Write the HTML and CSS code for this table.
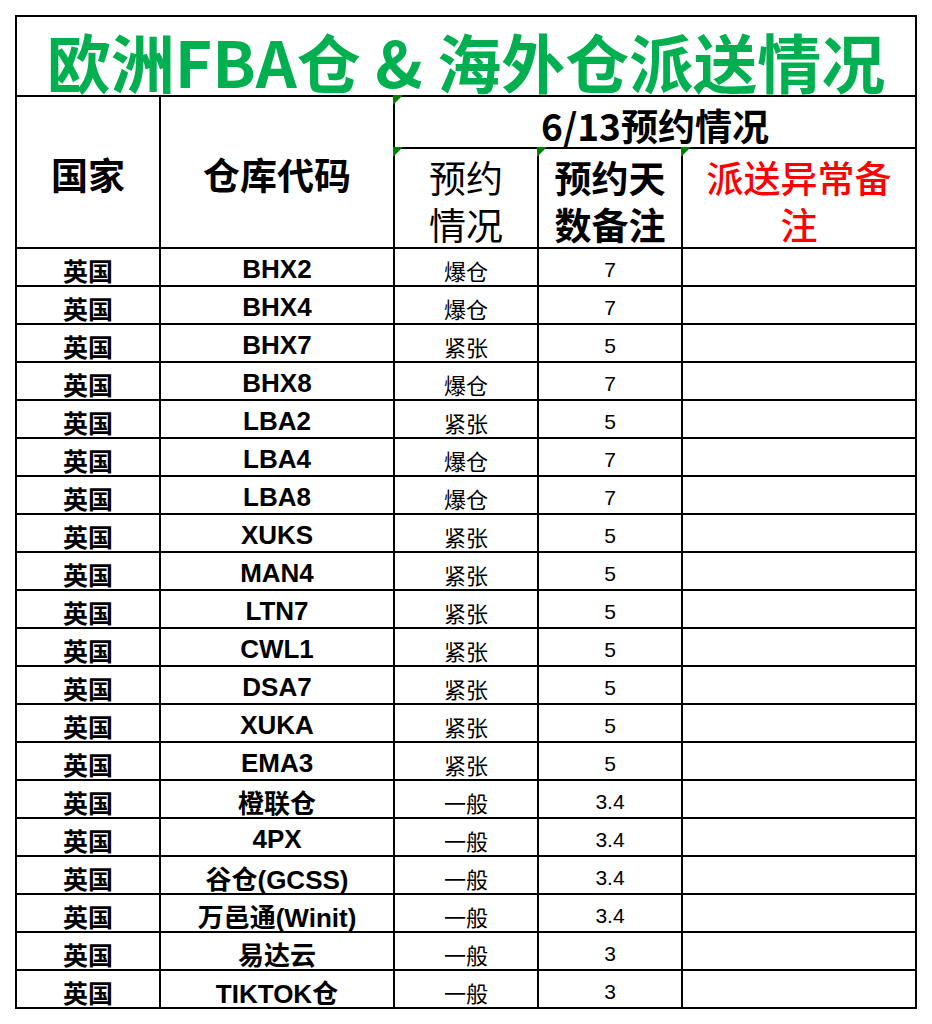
FILE: index.html
```html
<!DOCTYPE html>
<html lang="zh-CN">
<head>
<meta charset="utf-8">
<title>欧洲FBA仓 &amp; 海外仓派送情况</title>
<link rel="stylesheet" href="styles.css">
</head>
<body>
<div class="sheet">
  <div class="cell title">欧洲FBA仓 &amp; 海外仓派送情况</div>

  <div class="cell head span-rows">国家</div>
  <div class="cell head span-rows">仓库代码</div>
  <div class="cell head date flag">6/13预约情况</div>

  <div class="cell head thin flag">预约<br>情况</div>
  <div class="cell head flag">预约天<br>数备注</div>
  <div class="cell head red flag">派送异常备<br>注</div>

  <div class="cell country">英国</div><div class="cell code">BHX2</div><div class="cell status">爆仓</div><div class="cell days">7</div><div class="cell note"></div>
  <div class="cell country">英国</div><div class="cell code">BHX4</div><div class="cell status">爆仓</div><div class="cell days">7</div><div class="cell note"></div>
  <div class="cell country">英国</div><div class="cell code">BHX7</div><div class="cell status">紧张</div><div class="cell days">5</div><div class="cell note"></div>
  <div class="cell country">英国</div><div class="cell code">BHX8</div><div class="cell status">爆仓</div><div class="cell days">7</div><div class="cell note"></div>
  <div class="cell country">英国</div><div class="cell code">LBA2</div><div class="cell status">紧张</div><div class="cell days">5</div><div class="cell note"></div>
  <div class="cell country">英国</div><div class="cell code">LBA4</div><div class="cell status">爆仓</div><div class="cell days">7</div><div class="cell note"></div>
  <div class="cell country">英国</div><div class="cell code">LBA8</div><div class="cell status">爆仓</div><div class="cell days">7</div><div class="cell note"></div>
  <div class="cell country">英国</div><div class="cell code">XUKS</div><div class="cell status">紧张</div><div class="cell days">5</div><div class="cell note"></div>
  <div class="cell country">英国</div><div class="cell code">MAN4</div><div class="cell status">紧张</div><div class="cell days">5</div><div class="cell note"></div>
  <div class="cell country">英国</div><div class="cell code">LTN7</div><div class="cell status">紧张</div><div class="cell days">5</div><div class="cell note"></div>
  <div class="cell country">英国</div><div class="cell code">CWL1</div><div class="cell status">紧张</div><div class="cell days">5</div><div class="cell note"></div>
  <div class="cell country">英国</div><div class="cell code">DSA7</div><div class="cell status">紧张</div><div class="cell days">5</div><div class="cell note"></div>
  <div class="cell country">英国</div><div class="cell code">XUKA</div><div class="cell status">紧张</div><div class="cell days">5</div><div class="cell note"></div>
  <div class="cell country">英国</div><div class="cell code">EMA3</div><div class="cell status">紧张</div><div class="cell days">5</div><div class="cell note"></div>
  <div class="cell country">英国</div><div class="cell code">橙联仓</div><div class="cell status">一般</div><div class="cell days">3.4</div><div class="cell note"></div>
  <div class="cell country">英国</div><div class="cell code">4PX</div><div class="cell status">一般</div><div class="cell days">3.4</div><div class="cell note"></div>
  <div class="cell country">英国</div><div class="cell code">谷仓(GCSS)</div><div class="cell status">一般</div><div class="cell days">3.4</div><div class="cell note"></div>
  <div class="cell country">英国</div><div class="cell code">万邑通(Winit)</div><div class="cell status">一般</div><div class="cell days">3.4</div><div class="cell note"></div>
  <div class="cell country">英国</div><div class="cell code">易达云</div><div class="cell status">一般</div><div class="cell days">3</div><div class="cell note"></div>
  <div class="cell country">英国</div><div class="cell code">TIKTOK仓</div><div class="cell status">一般</div><div class="cell days">3</div><div class="cell note"></div>
</div>
</body>
</html>
```
FILE: styles.css
```css
html, body {
  margin: 0;
  padding: 0;
  background: #ffffff;
}

body {
  font-family: "Noto Sans CJK SC", "Liberation Sans", sans-serif;
  color: #000000;
}

.sheet {
  display: inline-grid;
  margin: 15px 0 0 15px;
  grid-template-columns: 144px 234px 144px 144px 234px;
  grid-template-rows: 80px 52px 100px repeat(20, 38px);
  border-top: 2px solid #000;
  border-left: 2px solid #000;
}

.cell {
  position: relative;
  box-sizing: border-box;
  border-right: 2px solid #000;
  border-bottom: 2px solid #000;
  display: flex;
  align-items: center;
  justify-content: center;
  text-align: center;
  padding-top: 5px;
  white-space: nowrap;
}

.title {
  grid-column: 1 / -1;
  font-size: 64px;
  font-weight: 700;
  color: #00b050;
  line-height: 1;
  padding-top: 8px;
}

.head {
  font-size: 37px;
  font-weight: 700;
  line-height: 47px;
}

.span-rows {
  grid-row: span 2;
}

.date {
  grid-column: 3 / span 3;
  font-size: 37px;
  line-height: 1;
  padding-top: 6px;
}

.thin {
  font-weight: 400;
}

.red {
  color: #ff0000;
  font-weight: 500;
}

.flag::before {
  content: "";
  position: absolute;
  top: -2px;
  left: -2px;
  width: 0;
  height: 0;
  border-top: 10px solid #008000;
  border-right: 10px solid transparent;
}

.country {
  font-size: 25px;
  font-weight: 700;
}

.code {
  font-family: "Liberation Sans", "Noto Sans CJK SC", sans-serif;
  font-size: 26px;
  font-weight: 700;
}

.status {
  font-size: 22px;
  font-weight: 400;
}

.days {
  font-family: "Liberation Sans", sans-serif;
  font-size: 21px;
}
```
